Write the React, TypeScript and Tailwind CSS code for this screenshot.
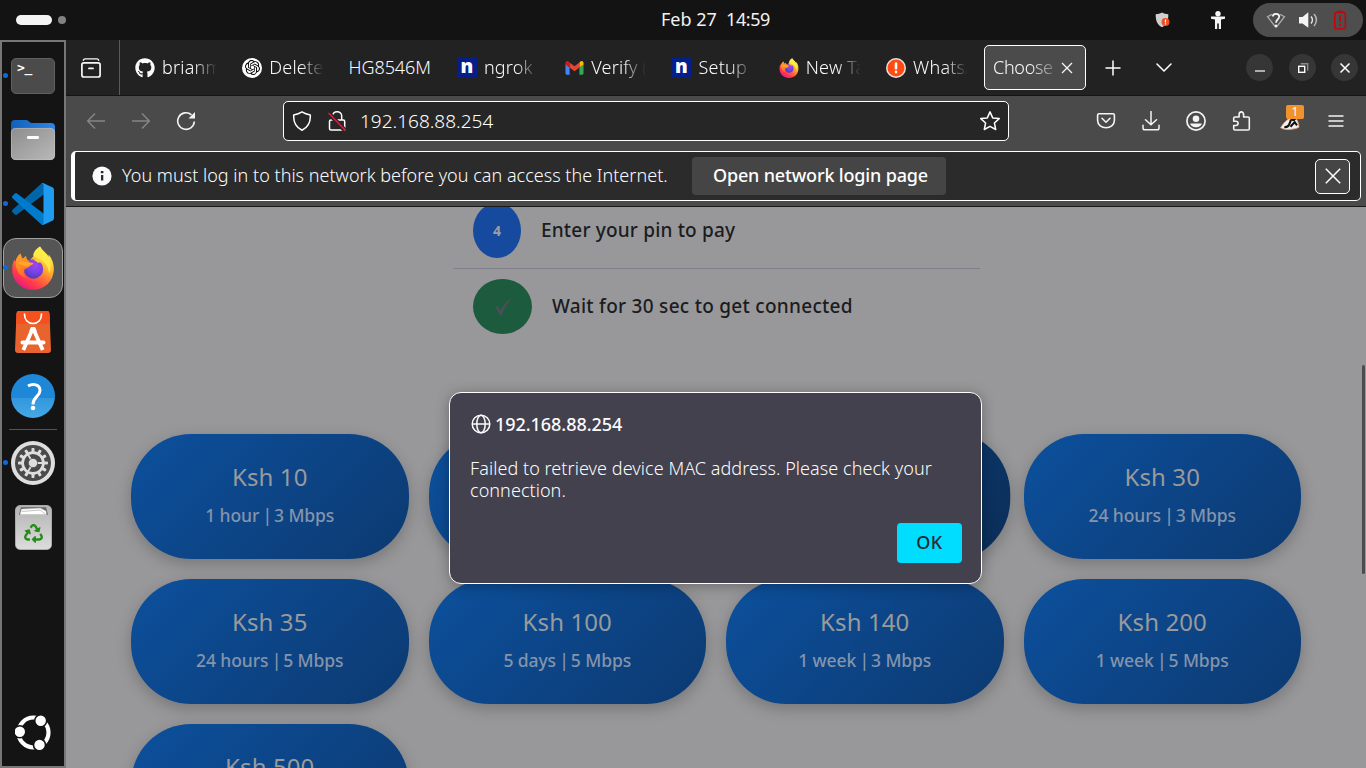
import React from "react";
import { FaGithub, FaRecycle } from "react-icons/fa";
import { SiOpenai } from "react-icons/si";

type SvgProps = { className?: string };

function Firefox({ className, id }: SvgProps & { id: string }) {
  return (
    <svg viewBox="0 0 42 44" className={className}>
      <defs>
        <linearGradient id={`${id}-body`} x1="0.85" y1="0.1" x2="0.25" y2="1">
          <stop offset="0" stopColor="#fff44f" />
          <stop offset="0.3" stopColor="#ffbd2f" />
          <stop offset="0.55" stopColor="#ff7139" />
          <stop offset="0.78" stopColor="#ff3750" />
          <stop offset="1" stopColor="#e31587" />
        </linearGradient>
        <linearGradient id={`${id}-head`} x1="0" y1="0" x2="0.6" y2="1">
          <stop offset="0" stopColor="#ffa436" />
          <stop offset="0.5" stopColor="#ff8a1e" />
          <stop offset="1" stopColor="#ff5a3c" />
        </linearGradient>
        <radialGradient id={`${id}-globe`} cx="0.6" cy="0.3" r="0.8">
          <stop offset="0" stopColor="#a145f0" />
          <stop offset="0.5" stopColor="#7542e5" />
          <stop offset="1" stopColor="#4b36b0" />
        </radialGradient>
      </defs>
      <path fill={`url(#${id}-body)`} d="M28 .6c2 4 5 5.4 7.6 8.5l.6 1.9.6-2.2c3.700 4.400 5.200 10 5 15.200C41.300 35.400 32.500 43.800 21 43.800 9.400 43.800.2 35.200.2 24c0-4.500.5-7 2.200-10.200L3.500 16c.6-3.600 2.500-6.600 5.200-8.500.2 2 .8 3.700 1.900 5.300 2.300 0 4.400.5 6.600 2.200l4-4.500C21.600 6.500 24 3.500 28 .6z" />
      <path fill="#fff04a" fillOpacity="0.8" d="M28 .6c2 4 5 5.400 7.200 8.500 4 5.500 4.500 12 1.800 18.400-.5-8.500-5.500-12-10-14.200-3.500-1.700-5.200-3-5.800-4.500C22 5 24.500 3 28 .6z" />
      <circle cx="21.500" cy="23" r="9.700" fill={`url(#${id}-globe)`} />
      <path fill="#ffcf3a" d="M20.500 14c4-2 8 0 9 3-1.500-.6-2.500-.5-3.500 0-1.500-1.800-3.300-2.700-5.500-3z" />
      <path fill={`url(#${id}-head)`} d="M3.500 16c.6-3.600 2.500-6.600 5.200-8.500.2 2 .8 3.700 1.900 5.300l3.400-3c.2 1.800.8 3.400 2 4.700 1.300 1.600 3.500 2.600 5.500 2.800-.4 2-3.500 2.200-5 4.200-.9 1.200-3.400.5-4.200 2.700-.8 2.300.2 5.800 2.500 8C8 31 3.500 24 3.500 16z" />
      <path fill="#ffb02e" fillOpacity="0.8" d="M6 17c3-2.500 7-1.500 10-.8 1.800.4 3.600.7 5.300.6-.5 2-3.400 2-5 4-3.200-.3-6.300-1.800-10.300-3.800z" />
    </svg>
  );
}

function VsCode({ className }: SvgProps) {
  return (
    <svg viewBox="0 0 100 100" className={className}>
      <path fill="#0065a9" d="M96.500 10.800 75.900.9c-2.400-1.200-5.300-.7-7.100 1.200L1.300 63.600c-1.800 1.700-1.800 4.500 0 6.200l5.500 5c1.500 1.300 3.700 1.400 5.300.2L93.300 13.400c2.700-2 6.600-.1 6.600 3.300v-.2c0-2.400-1.300-4.600-3.400-5.700z" />
      <path fill="#007acc" d="m96.500 89.200-20.600 9.900c-2.400 1.200-5.300.7-7.100-1.200L1.300 36.400c-1.800-1.700-1.800-4.500 0-6.200l5.500-5c1.500-1.300 3.700-1.400 5.300-.2l81.200 61.600c2.700 2 6.600.1 6.600-3.300v.2c0 2.400-1.300 4.600-3.400 5.700z" />
      <path fill="#1f9cf0" d="M75.900 99.100c-2.400 1.200-5.300.7-7.100-1.200 2.300 2.300 6.200.7 6.200-2.600V4.700c0-3.300-3.900-4.900-6.200-2.600 1.900-1.900 4.700-2.300 7.100-1.200l20.600 9.900c2.100 1 3.500 3.200 3.500 5.600v67.200c0 2.400-1.400 4.600-3.500 5.600z" />
    </svg>
  );
}

function Terminal() {
  return (
    <div className="flex h-9 w-11 rounded-[5px] border border-[#606060] bg-[#4b4b4b] pl-[5px] pt-[2px] font-['DejaVu_Sans_Mono',monospace] text-[13px] font-bold leading-[14px] tracking-[-0.4px] text-white">
      &gt;_
    </div>
  );
}

function Files() {
  return (
    <svg viewBox="0 0 46 42" className="h-[42px] w-[46px]">
      <defs>
        <linearGradient id="files-front" x1="0" y1="0" x2="1" y2="1">
          <stop offset="0" stopColor="#8d8d8d" />
          <stop offset="1" stopColor="#b9b9b9" />
        </linearGradient>
        <linearGradient id="files-back" x1="0" y1="0" x2="1" y2="0">
          <stop offset="0" stopColor="#1360b8" />
          <stop offset="1" stopColor="#2b86ec" />
        </linearGradient>
      </defs>
      <path fill="url(#files-back)" d="M1 5a4 4 0 0 1 4-4h11c3 0 3 3 6 3h19a4 4 0 0 1 4 4v14H1z" />
      <rect x="1" y="9" width="44" height="32" rx="4.500" fill="url(#files-front)" />
      <rect x="1.400" y="9.400" width="43.200" height="31.200" rx="4.200" fill="none" stroke="#c6c6c6" strokeOpacity="0.6" strokeWidth="0.800" />
      <rect x="17" y="17" width="12" height="3" rx="1.300" fill="#fff" />
    </svg>
  );
}

function AppCenter() {
  return (
    <svg viewBox="0 0 36 42" className="h-[42px] w-9">
      <path fill="#e9632f" d="M4 0h28a2.500 2.500 0 0 1 2.500 2.300L36 39a3 3 0 0 1-3 3H3a3 3 0 0 1-3-3L1.500 2.300A2.500 2.500 0 0 1 4 0z" />
      <path fill="#f4511e" d="M4 0h28a2.500 2.500 0 0 1 2.500 2.300L35 13H1L1.500 2.300A2.500 2.500 0 0 1 4 0z" />
      <path fill="none" stroke="#fff" strokeWidth="1.700" strokeLinecap="round" d="M9.500 3c0 6 3.500 9.500 8.500 9.500S26.500 9 26.500 3" />
      <path fill="none" stroke="#fff" strokeWidth="3.800" d="M18 17 8.300 39M18 17l9.700 22" />
      <path fill="none" stroke="#fff" strokeWidth="4" strokeLinecap="round" d="M7.500 31.500h21" />
      <path fill="#fff" d="M16 16h4l2 4.500h-8z" />
    </svg>
  );
}

function Help() {
  return (
    <svg viewBox="0 0 44 44" className="h-11 w-11">
      <defs>
        <linearGradient id="help" x1="0" y1="0" x2="0" y2="1">
          <stop offset="0.540" stopColor="#1e87d8" />
          <stop offset="0.550" stopColor="#3297dd" />
          <stop offset="1" stopColor="#46a8e6" />
        </linearGradient>
      </defs>
      <circle cx="22" cy="22" r="22" fill="url(#help)" />
      <path fill="none" stroke="#fff" strokeWidth="3" d="M17 12c5-3 12-1.500 12 4.500 0 6-7 6-7 14" />
      <circle cx="22" cy="34" r="2.300" fill="#fff" />
    </svg>
  );
}

function Gear() {
  const teeth = Array.from({ length: 12 }, (_, i) => i * 30);
  return (
    <svg viewBox="0 0 44 44" className="h-11 w-11">
      <circle cx="22" cy="22" r="22" fill="#dedede" />
      <circle cx="22" cy="22" r="18" fill="#4a4a4a" />
      {teeth.map((a) => (
        <rect key={a} x="20.500" y="7" width="3" height="5" rx="0.800" fill="#dedede" transform={`rotate(${a} 22 22)`} />
      ))}
      <circle cx="22" cy="22" r="10.400" fill="none" stroke="#dedede" strokeWidth="2.700" />
      <path stroke="#dedede" strokeWidth="1.800" d="M22 22h9M22 22l-5-8.500M22 22l-5 8.500" />
      <circle cx="22" cy="22" r="4.600" fill="#dedede" stroke="#4a4a4a" strokeWidth="0.600" />
    </svg>
  );
}

function Trash() {
  return (
    <div className="relative h-[45px] w-[37px] rounded-[5px] border border-[#aaa] bg-gradient-to-b from-[#b4b4b4] to-[#dcdcdc]">
      <svg viewBox="0 0 30 8" className="absolute left-[3px] top-[1px] h-2 w-[29px]">
        <path fill="#666" d="M2 0h26l2 8H0z" />
        <path fill="#fff" stroke="#aaa" strokeWidth="0.500" d="M2.500 2 22 1l6 3 .5 4H1z" />
        <path fill="none" stroke="#999" strokeWidth="0.600" d="M3 4.500 22 3l5 4" />
      </svg>
      <FaRecycle className="absolute left-[8px] top-[18px] h-[19px] w-[19px] text-[#288a1c]" />
    </div>
  );
}

function UbuntuLogo() {
  return (
    <svg viewBox="0 0 36 36" className="h-9 w-9">
      <circle cx="18.500" cy="17.500" r="15" fill="none" stroke="#fff" strokeWidth="4.200" />
      <g fill="#fff" stroke="#141414" strokeWidth="1.600">
        <circle cx="4.800" cy="16.800" r="6" />
        <circle cx="25.700" cy="5.700" r="6" />
        <circle cx="24.500" cy="29.900" r="6" />
      </g>
    </svg>
  );
}

function DockSlot({ children, running, active }: { children: React.ReactNode; running?: boolean; active?: boolean }) {
  return (
    <div className="relative flex h-16 w-full shrink-0 items-center justify-center">
      {active && <div className="absolute left-[1px] top-[2px] h-[60px] w-[60px] rounded-[13px] border border-[#a0a0a0] bg-[#555555]" />}
      {running && <span className="absolute left-[1px] top-[29px] h-[5px] w-[5px] rounded-full bg-[#0e6bd6]" />}
      <div className="relative flex">{children}</div>
    </div>
  );
}

function Dock() {
  return (
    <aside className="flex w-[66px] shrink-0 flex-col border-2 border-[#777777] bg-[#141414] pt-[2px]">
      <DockSlot running><Terminal /></DockSlot>
      <DockSlot><Files /></DockSlot>
      <DockSlot running><VsCode className="h-[42px] w-[42px]" /></DockSlot>
      <DockSlot running active><Firefox id="dock" className="h-11 w-[42px]" /></DockSlot>
      <DockSlot><AppCenter /></DockSlot>
      <DockSlot><Help /></DockSlot>
      <div className="mx-auto my-[1px] h-px w-12 shrink-0 bg-[#555555]" />
      <DockSlot running><Gear /></DockSlot>
      <DockSlot><Trash /></DockSlot>
      <div className="mb-[15px] mt-auto flex justify-center"><UbuntuLogo /></div>
    </aside>
  );
}

function SystemBar() {
  return (
    <header className="flex h-10 shrink-0 items-center bg-[#131313] text-[#f2f2f2]">
      <div className="flex w-[661px] items-center gap-[6px] pl-4">
        <span className="h-[10px] w-9 rounded-full bg-[#f4f4f4]" />
        <span className="h-2 w-2 rounded-full bg-[#838383]" />
      </div>
      <div className="flex w-[109px] justify-between whitespace-nowrap pb-[2px] text-[18px] leading-[38px]">
        <span>Feb 27</span>
        <span className="tracking-[-0.4px]">14:59</span>
      </div>
      <div className="ml-auto flex items-center justify-end pr-[3px]">
        <svg viewBox="0 0 16 18" className="mr-[39px] h-[18px] w-4">
          <path fill="#cfcfcf" d="M7 1.500c2 1.300 4 1.700 6.300 1.700C13.500 9 12 13.500 7 16.200 2 13.500.5 9 .700 3.200 3 3.200 5 2.800 7 1.500z" />
          <circle cx="10.500" cy="11" r="4" fill="#f05123" />
          <path stroke="#fff" strokeWidth="1.200" d="M10.500 8.500v3M10.500 12.300v1.200" />
        </svg>
        <svg viewBox="0 0 16 20" className="mr-[27px] h-5 w-4 fill-[#f4f4f4]">
          <circle cx="8" cy="3.700" r="2.700" />
          <path d="M1 6.500h14v2.300l-4 .8V19H8.800v-5.500H7.200V19H5V9.600l-4-.8z" />
        </svg>
        <div className="flex h-[34px] w-[110px] items-center rounded-full bg-[#4e4e4e] pl-[13px]">
          <svg viewBox="0 0 20 20" className="h-5 w-5" fill="none">
            <path stroke="#a8a8a8" strokeWidth="1.300" d="M6 4.400 1.500 6.700 8.700 16M14 4.400l4.500 2.300L11.300 16" />
            <path stroke="#f4f4f4" strokeWidth="1.800" d="M6.800 6.500C7 3 13.200 3 13.200 6.500c0 3-3.200 3-3.200 6.200" />
            <circle cx="10" cy="16" r="1.500" fill="#f4f4f4" />
          </svg>
          <svg viewBox="0 0 20 20" className="ml-[13px] h-5 w-5" fill="none">
            <path fill="#f4f4f4" d="M0 7h3.500L9.300 2.200v15.600L3.500 13.500H0z" />
            <path stroke="#e8e8e8" strokeWidth="1.500" d="M12 6.500c1.800 2 1.800 5 0 7" />
            <path stroke="#b8b8b8" strokeWidth="1.500" d="M15 4c3.200 3.500 3.200 8.500 0 12" />
          </svg>
          <svg viewBox="0 0 14 20" className="ml-[14px] h-5 w-[14px]" fill="none">
            <rect x="1.800" y="2.400" width="10.600" height="16.400" rx="1.800" stroke="#c2060c" strokeWidth="1.600" />
            <path stroke="#c2060c" strokeWidth="1.700" d="M4.500 1.600h5.200M7.100 5.500v6.300M7.100 13.600v2.200" />
          </svg>
        </div>
      </div>
    </header>
  );
}

function Tab({ icon, children, fit }: { icon?: React.ReactNode; children: React.ReactNode; fit?: boolean }) {
  return (
    <div className="flex h-[55px] w-[107.3px] shrink-0 items-center pl-[10px]">
      {icon && <span className="mr-[7px] flex h-5 w-5 shrink-0 items-center justify-center">{icon}</span>}
      {fit ? (
        <span className="-ml-[1px] whitespace-nowrap tracking-[-0.1px]">{children}</span>
      ) : (
        <span className="w-[56px] overflow-hidden whitespace-nowrap tracking-[0.2px] [mask-image:linear-gradient(to_right,black_56%,transparent_98%)]">{children}</span>
      )}
    </div>
  );
}

function NgrokMark() {
  return <span className="flex h-5 w-5 items-center justify-center bg-[#041e8c] pb-[3px] text-[19px] font-black leading-5 text-white">n</span>;
}

function GmailMark() {
  return (
    <svg viewBox="0 0 18 14" className="h-[14px] w-[19px]">
      <path fill="#4285f4" d="M0 3v9.600c0 .7.600 1.200 1.200 1.200h2.900V6.500z" />
      <path fill="#34a853" d="M13.900 13.800h2.900c.6 0 1.200-.5 1.200-1.200V3l-4.100 3.500z" />
      <path fill="#fbbc04" d="M13.900 1.500v5L18 3.400V1.900C18 .300 16.200-.500 15 .500z" />
      <path fill="#ea4335" d="M4.100 6.500v-5L9 5.300l4.900-3.800v5L9 10.200z" />
      <path fill="#c5221f" d="M0 1.900v1.500l4.100 3.100v-5L3 .500C1.700-.500 0 .300 0 1.900z" />
    </svg>
  );
}

function AlertMark() {
  return (
    <svg viewBox="0 0 20 20" className="h-5 w-5">
      <circle cx="10" cy="10" r="10" fill="#e8e3e0" />
      <circle cx="10" cy="10" r="8.500" fill="#ff4a12" />
      <path stroke="#fff" strokeWidth="2.600" strokeLinecap="round" d="M10 5.500v4.700M10 13.800v.3" />
    </svg>
  );
}

function WindowButton({ children }: { children: React.ReactNode }) {
  return <span className="flex h-[27px] w-[27px] items-center justify-center rounded-full bg-[#363636]">{children}</span>;
}

function TabStrip() {
  return (
    <div className="flex h-14 shrink-0 items-center border-b border-[#151515] bg-[#222222] text-[18px] font-light text-[#fbfbfe]">
      <div className="flex h-[55px] w-[54px] shrink-0 items-center justify-center border-r border-[#5a5a5a]">
        <svg viewBox="0 0 20 20" className="ml-[-3px] h-5 w-5" fill="none" stroke="#f8f8f8" strokeLinecap="round">
          <path strokeWidth="1.400" d="M2.300 2.200C2.600 1.200 3.200.9 4 .9h12c.8 0 1.400.3 1.700 1.300" />
          <rect x="0.900" y="4.900" width="18.200" height="14.100" rx="2" strokeWidth="1.700" />
          <path strokeWidth="1.800" d="M8 10.400h4" />
        </svg>
      </div>
      <div className="flex pl-[5px]">
        <Tab icon={<FaGithub className="h-5 w-5" />}>brianm</Tab>
        <Tab icon={<span className="flex h-5 w-5 items-center justify-center rounded-full bg-white"><SiOpenai className="h-[15px] w-[15px] text-black" /></span>}>Delete</Tab>
        <Tab fit>HG8546M</Tab>
        <Tab icon={<NgrokMark />}>ngrok -</Tab>
        <Tab icon={<GmailMark />}>Verify (</Tab>
        <Tab icon={<NgrokMark />}>Setup -</Tab>
        <Tab icon={<Firefox id="tab" className="h-5 w-[20px]" />}>New Ta</Tab>
        <Tab icon={<AlertMark />}>WhatsA</Tab>
      </div>
      <div className="ml-[0.6px] flex h-[45px] w-[102px] shrink-0 items-center rounded-[5px] border border-white bg-[#4b4b4b] pl-2">
        <span className="w-[61px] overflow-hidden whitespace-nowrap tracking-[-0.3px] [mask-image:linear-gradient(to_right,black_60%,transparent_115%)]">Choose</span>
        <svg viewBox="0 0 12 12" className="ml-[7px] h-3 w-3"><path stroke="#f4f4f4" strokeWidth="1.300" d="m1 1 10 10M11 1 1 11" /></svg>
      </div>
      <svg viewBox="0 0 16 16" className="ml-[19px] h-4 w-4 shrink-0"><path stroke="#fff" strokeWidth="1.500" d="M8 .5v15M.5 8h15" /></svg>
      <svg viewBox="0 0 16 10" className="ml-[35px] h-[10px] w-4 shrink-0" fill="none"><path stroke="#fff" strokeWidth="1.500" strokeLinecap="round" strokeLinejoin="round" d="m1 1 7 7 7-7" /></svg>
      <div className="ml-auto flex pr-[8px]">
        <WindowButton><svg viewBox="0 0 10 10" className="h-[10px] w-[10px]"><path stroke="#fff" strokeWidth="1.200" d="M0 8h10" /></svg></WindowButton>
        <span className="w-4" />
        <WindowButton>
          <svg viewBox="0 0 12 12" className="h-3 w-3" fill="none">
            <rect x="1.700" y="4.300" width="6" height="6" stroke="#fff" strokeWidth="1.400" />
            <path stroke="#8b8b8b" strokeWidth="1.400" d="M3.700 1.700h7v7" />
          </svg>
        </WindowButton>
        <span className="w-[15px]" />
        <WindowButton><svg viewBox="0 0 12 12" className="h-3 w-3"><path stroke="#fff" strokeWidth="1.500" d="m1.500 1.500 9 9M10.500 1.500l-9 9" /></svg></WindowButton>
      </div>
    </div>
  );
}

function NavBar() {
  return (
    <div className="flex h-[50px] items-center">
      <svg viewBox="0 0 20 20" className="ml-[20px] h-5 w-5" fill="none" stroke="#858585" strokeWidth="1.500"><path d="M19 10H2M9 2.500 1.700 10 9 17.500" /></svg>
      <svg viewBox="0 0 20 20" className="ml-[25px] h-5 w-5" fill="none" stroke="#858585" strokeWidth="1.500"><path d="M1 10h17M11 2.500l7.300 7.500L11 17.500" /></svg>
      <svg viewBox="0 0 20 20" className="ml-[25px] h-5 w-5" fill="none">
        <path stroke="#f4f4f4" strokeWidth="1.600" d="M18.300 10.500A8.300 8.300 0 1 1 15.500 3.800" />
        <path fill="#f4f4f4" d="M19 1v6.500h-6.500z" />
      </svg>
      <div className="ml-[87px] flex h-10 w-[726px] items-center rounded-[5px] border border-white bg-[#262626] pl-[8px]">
        <svg viewBox="0 0 20 20" className="h-5 w-5" fill="none"><path stroke="#fff" strokeWidth="1.500" strokeLinejoin="round" d="M10 .9c2.500 1.600 5 2.500 8.300 3.200C18.700 11 16.500 16.200 10 19.200 3.500 16.200 1.300 11 1.700 4.100 5 3.400 7.500 2.500 10 .9z" /></svg>
        <svg viewBox="0 0 20 22" className="ml-[15px] h-[22px] w-5" fill="none">
          <path stroke="#fff" strokeWidth="1.500" d="M5.500 9.500V6C5.500.300 14.700.300 14.700 6v3.500M4 10h12.200c1 0 1.500.5 1.500 1.500v7c0 1-.5 1.500-1.500 1.500H4c-1 0-1.500-.5-1.500-1.500v-7C2.500 10.500 3 10 4 10z" />
          <path stroke="#262626" strokeWidth="4.500" d="M2 3.500 17.500 20" />
          <path stroke="#f0143c" strokeWidth="1.500" d="M1.500 3 18.500 20.500" />
        </svg>
        <span className="ml-[13px] text-[19px] font-light text-white">192.168.88.254</span>
        <svg viewBox="0 0 20 20" className="ml-auto mr-[8px] h-5 w-5" fill="none"><path stroke="#fff" strokeWidth="1.500" strokeLinejoin="round" d="m10 .900 2.700 6 6.500.700-4.800 4.400 1.300 6.500L10 15.300l-5.700 3.200 1.300-6.500L.800 7.600l6.500-.7z" /></svg>
      </div>
      <svg viewBox="0 0 20 20" className="ml-[87px] h-5 w-5" fill="none" stroke="#f4f4f4" strokeWidth="1.600" strokeLinejoin="round">
        <path d="M3 2.800h14c.9 0 1.400.5 1.400 1.400v5c0 10-16.800 10-16.800 0v-5c0-.9.500-1.400 1.400-1.400z" /><path strokeLinecap="round" d="m6 7.300 4 3.900 4-3.900" />
      </svg>
      <svg viewBox="0 0 20 20" className="ml-[24.500px] h-5 w-5" fill="none" stroke="#f4f4f4" strokeWidth="1.500"><path strokeLinecap="round" d="M10 .500v13M4.500 8.700l5.500 5 5.500-5M2 14.300v2.700c0 1.200.6 1.800 1.800 1.800h12.400c1.200 0 1.800-.6 1.800-1.800v-2.700" /></svg>
      <svg viewBox="0 0 20 20" className="ml-[25.500px] h-5 w-5" fill="none"><circle cx="10" cy="10" r="9.100" stroke="#f4f4f4" strokeWidth="1.700" /><circle cx="10" cy="7.800" r="3.300" fill="#f4f4f4" /><path fill="#f4f4f4" d="M4.300 12.500h11.400c-.5 5-10.900 5-11.400 0z" /></svg>
      <svg viewBox="0 0 20 20" className="ml-[26px] h-5 w-5" fill="none" stroke="#f4f4f4" strokeWidth="1.600" strokeLinejoin="round">
        <path d="M3 19c-.9 0-1.300-.5-1.300-1.300v-3.200h2c3.200 0 3.200-4.300 0-4.300h-2V7.300C1.700 6.400 2.100 6 3 6h4.100V3.600c0-3.600 4.500-3.600 4.500 0V6H16c.9 0 1.300.5 1.300 1.300v10.400c0 .9-.4 1.300-1.300 1.300z" />
      </svg>
      <div className="relative ml-[27px] h-[26px] w-[27px]">
        <svg viewBox="0 0 22 16" className="absolute left-[0px] top-[8px] h-[15px] w-[22px]">
          <path fill="#f2f2f2" stroke="#e8a77b" strokeWidth="1" d="M1 12.500C3.500 8 7.500 4 12 1.500l5.500 1c1.500 3 3 6 3 9.500-5 2.500-15 3.500-19.500.5z" />
          <path stroke="#111" strokeWidth="2.200" fill="none" d="M5 11.800c2.500.3 4-.5 5-2.500l2-5M11.500 11.500 16 6.500l2.500 3.500" />
          <path fill="#111" d="M10 4.500 14 2l4 1-2.500 2.500z" />
        </svg>
        <span className="absolute left-[7px] top-[-3px] flex h-[14px] w-[18px] items-center justify-center rounded-[2px] bg-[#f0932b] text-[12px] leading-[14px] text-white">1</span>
      </div>
      <svg viewBox="0 0 16 14" className="ml-[22px] h-[14px] w-4"><path stroke="#f4f4f4" strokeWidth="1.400" strokeLinecap="round" d="M1 2h14M1 7h14M1 12h14" /></svg>
    </div>
  );
}

function NetworkNotice() {
  return (
    <div className="mx-[5px] mt-[5px] flex h-[50px] items-center rounded-[5px] border border-l-4 border-white bg-[#2b2b2b] text-[18px] text-[#fbfbfe]">
      <svg viewBox="0 0 20 20" className="ml-[16.500px] h-5 w-5 shrink-0"><circle cx="10" cy="10" r="9.600" fill="#fbfbfe" /><path fill="#2b2b2b" d="M9 9h2.300v5.500H9zM8.800 5h2.600v2.300H8.800z" /></svg>
      <span className="ml-[10.500px] w-[570px] whitespace-nowrap pb-[2px] font-light tracking-[0.02px]">You must log in to this network before you can access the Internet.</span>
      <button className="h-[38px] w-[254px] rounded-[4px] bg-[#454545] pb-[2px] pl-[3px] font-medium tracking-[-0.16px] text-white">Open network login page</button>
      <span className="ml-auto mr-[10px] flex h-[35px] w-[35px] items-center justify-center rounded-[5px] border border-white bg-[#454545]">
        <svg viewBox="0 0 16 16" className="h-4 w-4"><path stroke="#fff" strokeWidth="1.500" d="m.8.800 14.400 14.400M15.200.800.800 15.200" /></svg>
      </span>
    </div>
  );
}

const plans = [
  ["Ksh 10", "1 hour | 3 Mbps"],
  ["", ""],
  ["", ""],
  ["Ksh 30", "24 hours | 3 Mbps"],
  ["Ksh 35", "24 hours | 5 Mbps"],
  ["Ksh 100", "5 days | 5 Mbps"],
  ["Ksh 140", "1 week | 3 Mbps"],
  ["Ksh 200", "1 week | 5 Mbps"],
  ["Ksh 500", ""],
];

function PlanCard({ index }: { index: number }) {
  const [price, terms] = plans[index];
  const [duration, speed] = terms.split(" | ");
  const tone = index === 2 ? "scale-[1.045] from-[#0d4586] to-[#0b2d56]" : "from-[#0c509d] to-[#0c3a71]";
  return (
    <div className={`flex h-[125px] flex-col items-center rounded-[60px] bg-linear-135 pt-[25px] shadow-[0_5px_15px_rgba(0,0,0,0.22)] ${tone}`}>
      <div className="text-[24px] leading-9 tracking-[0.1px] text-[#999a9c]">{price}</div>
      {terms && (
        <div className="mt-[8px] whitespace-pre text-[17.500px] font-medium leading-6 tracking-[-0.1px] text-[#8494ab]">
          {duration}<span className="tracking-[-1.300px]"> | </span>{speed}
        </div>
      )}
    </div>
  );
}

function Dialog() {
  return (
    <div className="absolute left-[383px] top-[185px] flex h-[192px] w-[533px] flex-col rounded-[12px] border border-white bg-[#42414d] pl-[20px] pr-[19px] pt-[19px] text-[18px] text-[#fbfbfe] shadow-[0_2px_14px_rgba(0,0,0,0.3)]">
      <div className="flex h-6 items-center">
        <svg viewBox="0 0 20 20" className="ml-[0.500px] mr-[4.500px] h-5 w-5" fill="none" stroke="#fbfbfe" strokeWidth="1.500">
          <circle cx="10" cy="10" r="8.800" /><ellipse cx="10" cy="10" rx="4.200" ry="8.800" /><path d="M1.200 10h17.600" />
        </svg>
        <span className="font-medium tracking-[-0.05px]">192.168.88.254</span>
      </div>
      <p className="mt-[21px] w-[480px] font-light leading-[22px] tracking-[0.060px]">Failed to retrieve device MAC address. Please check your connection.</p>
      <button className="mt-[22px] h-10 w-[65px] self-end rounded-[4px] bg-[#00ddff] pb-[2px] font-medium tracking-[0.500px] text-[#2b2a33]">OK</button>
    </div>
  );
}

function Page() {
  return (
    <main className="relative min-h-0 flex-1 overflow-hidden bg-[#98989a]">
      <div className="-mt-[14px] ml-[387px] w-[527px] text-[19px] font-medium text-[#1b1c21]">
        <div className="flex h-[76px] items-center border-b border-[#808089] px-5">
          <span className="mr-[20px] flex h-[55px] w-12 items-center justify-center rounded-[50%] bg-[#154a9e] pb-[1px] text-[14px] font-bold text-[#9a9da3]">4</span>
          <span className="tracking-[0.180px]">Enter your pin to pay</span>
        </div>
        <div className="flex h-[75px] items-center px-5">
          <span className="mr-[20px] flex h-[55px] w-[59px] items-center justify-center rounded-[50%] bg-[#1d5b3f]">
            <svg viewBox="0 0 18 18" className="h-[18px] w-[18px]"><path fill="#4c4f58" d="M1 9.500 3.500 8l3 4.500C9 7.500 12 4 16.800.800l.2.500C12.500 6.500 9.500 12 7.200 17H5.500C4.500 14 3 11.500 1 9.500z" /></svg>
          </span>
          <span className="tracking-[0.280px]">Wait for 30 sec to get connected</span>
        </div>
      </div>
      <div className="ml-[65px] mt-[90px] grid w-[1170px] grid-cols-4 gap-5">
        {plans.map((_, i) => <PlanCard key={i} index={i} />)}
      </div>
      <div className="absolute right-[1px] top-[158px] h-[209px] w-[3px] rounded-full bg-[#4c4c4e]" />
      <Dialog />
    </main>
  );
}

export default function App() {
  return (
    <div className="flex h-[768px] w-[1366px] flex-col overflow-hidden bg-[#131313] font-['Noto_Sans',sans-serif]">
      <SystemBar />
      <div className="flex min-h-0 flex-1">
        <Dock />
        <div className="flex min-w-0 flex-1 flex-col">
          <TabStrip />
          <div className="h-[111px] shrink-0 border-b border-[#1a1a1a] bg-[#4a4a4a]">
            <NavBar />
            <NetworkNotice />
          </div>
          <Page />
        </div>
      </div>
    </div>
  );
}
